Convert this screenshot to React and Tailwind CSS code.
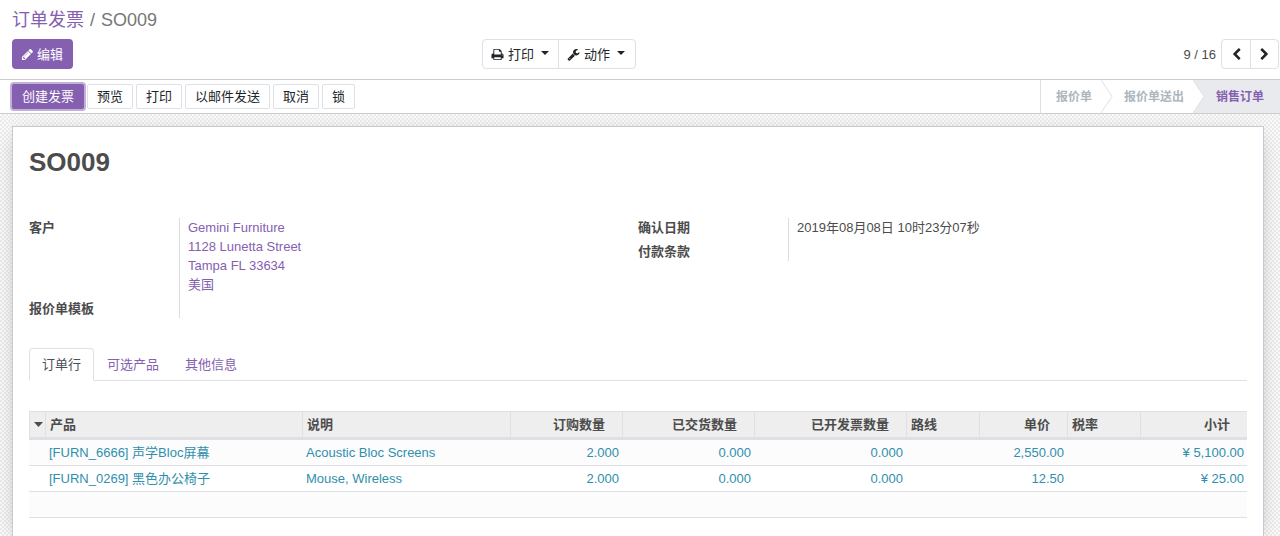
import { useState } from 'react';

const icons = {
  pencil:
    'M491 1536l91-91-235-235-91 91v107h128v128h107zm523-928q0-22-22-22-10 0-17 7l-542 542q-7 7-7 17 0 22 22 22 10 0 17-7l542-542q7-7 7-17zm-54-192l416 416-832 832h-416v-416zm683 96q0 53-37 90l-166 166-416-416 166-165q36-38 90-38 53 0 91 38l235 234q37 39 37 91z',
  print:
    'M448 1536h896v-256h-896v256zm0-640h896v-384h-160q-40 0-68-28t-28-68v-160h-640v640zm1152 64q0-26-19-45t-45-19-45 19-19 45 19 45 45 19 45-19 19-45zm128 0v416q0 13-9.5 22.5t-22.5 9.5h-224v160q0 40-28 68t-68 28h-960q-40 0-68-28t-28-68v-160h-224q-13 0-22.5-9.5t-9.5-22.5v-416q0-79 56.5-135.5t135.5-56.5h64v-544q0-40 28-68t68-28h672q40 0 88 20t76 48l152 152q28 28 48 76t20 88v256h64q79 0 135.5 56.5t56.5 135.5z',
  wrench:
    'M448 1472q0-26-19-45t-45-19-45 19-19 45 19 45 45 19 45-19 19-45zm644-420l-682 682q-37 37-90 37-52 0-91-37l-106-108q-38-36-38-90 0-53 38-91l681-681q39 98 114.5 173.5t173.5 114.5zm634-435q0 39-23 106-47 134-164.5 217.5t-258.5 83.5q-185 0-316.5-131.5t-131.5-316.5 131.5-316.5 316.5-131.5q58 0 121.5 16.5t107.5 46.5q16 11 16 28t-16 28l-293 169v224l193 107q5-3 79-48.5t135.5-81 70.5-35.5q15 0 23.5 10t8.5 25z',
  left: 'M1427 301l-531 531 531 531q19 19 19 45t-19 45l-166 166q-19 19-45 19t-45-19l-742-742q-19-19-19-45t19-45l742-742q19-19 45-19t45 19l166 166q19 19 19 45t-19 45z',
  right:
    'M1363 877l-742 742q-19 19-45 19t-45-19l-166-166q-19-19-19-45t19-45l531-531-531-531q-19-19-19-45t19-45l166-166q19-19 45-19t45 19l742 742q19 19 19 45t-19 45z',
};

function Icon({ name }) {
  return (
    <svg viewBox="0 0 1792 1792" className="size-[13px] shrink-0 fill-current" aria-hidden="true">
      <path d={icons[name]} />
    </svg>
  );
}

function Caret({ size = 'w-2 h-1' }) {
  return (
    <svg viewBox="0 0 8 4" preserveAspectRatio="none" className={`${size} shrink-0 fill-current`} aria-hidden="true">
      <path d="M0 0h8L4 4z" />
    </svg>
  );
}

function MenuButton({ icon, children }) {
  return (
    <button className="flex items-center gap-1 pl-2 pr-[10px] border-l border-[#dee0e8] first:border-l-0 first:pr-[9px]">
      <Icon name={icon} />
      {children}
      <span className="ml-[3px] pb-[2px]">
        <Caret />
      </span>
    </button>
  );
}

function ControlPanel() {
  return (
    <header className="pl-3 pt-2 pb-[10px] border-b border-[#cccccc]">
      <nav className="flex gap-[6px] text-lg leading-6 text-[#777777]">
        <a href="#orders" className="text-[#8560b1]">订单发票</a>
        <span>/</span>
        <span>SO009</span>
      </nav>
      <div className="mt-[7px] grid grid-cols-2">
        <div className="flex justify-between pr-[10px]">
          <button className="flex items-center gap-[3px] h-[30px] pl-[9px] pr-[10px] rounded-sm bg-[#8560b1] text-white">
            <Icon name="pencil" />
            编辑
          </button>
          <div className="flex h-[30px] border border-[#dee0e8] rounded-sm text-[#212529]">
            <MenuButton icon="print">打印</MenuButton>
            <MenuButton icon="wrench">动作</MenuButton>
          </div>
        </div>
        <div className="flex items-center justify-end gap-[5px] pr-px">
          <span>9 / 16</span>
          <div className="flex h-[30px] border border-[#dee0e8] rounded-sm text-[#212529]">
            <button aria-label="上一页" className="pl-2 pr-[7px]">
              <Icon name="left" />
            </button>
            <button aria-label="下一页" className="px-[7px] border-l border-[#dee0e8]">
              <Icon name="right" />
            </button>
          </div>
        </div>
      </div>
    </header>
  );
}

function StepArrow({ next }) {
  return (
    <svg viewBox="0 0 12 33" className={`w-3 h-[33px] ${next}`} aria-hidden="true">
      <path d="M0 0L11 16.500L0 33z" fill="#ffffff" />
      <path d="M0 0L11 16.500L0 33" fill="none" stroke="#dee0e8" />
    </svg>
  );
}

function StatusBar() {
  const actions = ['预览', '打印', '以邮件发送', '取消', '锁'];
  return (
    <div className="flex justify-between pl-3 border-b border-[#cccccc]">
      <div className="flex items-center gap-[3px]">
        <button className="h-[25px] px-[10px] rounded-xs bg-[#8560b1] text-white ring-2 ring-[#c3b0d9]">
          创建发票
        </button>
        {actions.map((action) => (
          <button key={action} className="h-[25px] px-[9px] border border-[#dee0e8] rounded-xs text-[#212529]">
            {action}
          </button>
        ))}
      </div>
      <div className="flex h-[33px] items-center border-l border-[#dee0e8] text-xs font-bold text-[#adb5bd]">
        <button className="pl-[15px] pr-[9px]">报价单</button>
        <StepArrow next="bg-white" />
        <button className="pl-[11px] pr-[9px]">报价单送出</button>
        <StepArrow next="bg-[#e9eaee]" />
        <button className="self-stretch pl-[11px] pr-4 bg-[#e9eaee] text-[#8560b1]">销售订单</button>
      </div>
    </div>
  );
}

function Field({ label, children }) {
  return (
    <div className="group grid grid-cols-[150px_1fr]">
      <dt className="font-bold">{label}</dt>
      <dd className="pl-2 pb-[5px] group-last:pb-0 border-l border-[#dddddd]">{children}</dd>
    </div>
  );
}

const columns = [
  { label: '产品', width: 'w-[257px]' },
  { label: '说明', width: 'w-[208px]' },
  { label: '订购数量', width: 'w-[112px]', numeric: true },
  { label: '已交货数量', width: 'w-[132px]', numeric: true },
  { label: '已开发票数量', width: 'w-[152px]', numeric: true },
  { label: '路线', width: 'w-[73px]' },
  { label: '单价', width: 'w-[88px]', numeric: true },
  { label: '税率', width: 'w-[73px]' },
  { label: '小计', width: 'w-[107px]', numeric: true },
];

const lines = [
  ['[FURN_6666] 声学Bloc屏幕', 'Acoustic Bloc Screens', '2.000', '0.000', '0.000', '', '2,550.00', '', '¥ 5,100.00'],
  ['[FURN_0269] 黑色办公椅子', 'Mouse, Wireless', '2.000', '0.000', '0.000', '', '12.50', '', '¥ 25.00'],
];

function OrderLines() {
  return (
    <table className="w-full mt-[30px] table-fixed border-separate border-spacing-0">
      <thead>
        <tr className="h-[29px] bg-[#eeeeee]">
          <th className="w-4 pl-1 border-l border-t border-b-[3px] border-[#dfe0e5]">
            <Caret size="w-[9px] h-[5px]" />
          </th>
          {columns.map((col) => (
            <th
              key={col.label}
              className={`${col.width} border-l border-t border-b-[3px] border-[#dfe0e5] ${
                col.numeric ? 'text-right pr-[17px]' : 'text-left pl-1'
              }`}
            >
              {col.label}
            </th>
          ))}
        </tr>
      </thead>
      <tbody className="text-[#2f8fad]">
        {lines.map((line) => (
          <tr key={line[0]} className="h-[26px] odd:bg-[#fcfcfc]">
            <td className="border-b border-[#dfe0e5]" />
            {line.map((value, i) => (
              <td
                key={columns[i].label}
                className={`border-b border-[#dfe0e5] ${columns[i].numeric ? 'pr-[3px] text-right' : 'pl-1'}`}
              >
                {value}
              </td>
            ))}
          </tr>
        ))}
        <tr className="h-[26px] bg-[#fcfcfc]">
          <td colSpan={10} className="border-b border-[#dfe0e5]" />
        </tr>
      </tbody>
    </table>
  );
}

export default function App() {
  const [tab, setTab] = useState('订单行');

  return (
    <div className="min-h-screen flex flex-col bg-white font-['Liberation_Sans','Noto_Sans_CJK_SC',sans-serif] text-[13px] leading-[19px] text-[#4c4c4c]">
      <ControlPanel />
      <StatusBar />
      <main className="flex-1 flex flex-col pl-3 pr-4 pt-3 overflow-hidden bg-[conic-gradient(#ebebeb_25%,#f9f9f9_0_50%,#ebebeb_0_75%,#f9f9f9_0)] bg-[length:4px_4px]">
        <section className="flex-1 px-4 pt-4 bg-white border border-b-0 border-[#c8c8d3] shadow-[0_5px_20px_-8px_rgba(0,0,0,0.4)]">
          <h1 className="mt-1 text-[26px] leading-[31px] font-bold">SO009</h1>
          <div className="mt-10 grid grid-cols-2">
            <dl>
              <Field label="客户">
                <a href="#partner" className="block text-[#8560b1]">
                  Gemini Furniture<br />1128 Lunetta Street<br />Tampa FL 33634<br />美国
                </a>
              </Field>
              <Field label="报价单模板" />
            </dl>
            <dl>
              <Field label="确认日期">2019年08月08日 10时23分07秒</Field>
              <Field label="付款条款" />
            </dl>
          </div>
          <div role="tablist" className="mt-[30px] flex border-b border-[#dee2e6]">
            {['订单行', '可选产品', '其他信息'].map((name) => (
              <button
                key={name}
                role="tab"
                aria-selected={tab === name}
                onClick={() => setTab(name)}
                className={`h-[33px] -mb-px px-3 border rounded-t-sm ${
                  tab === name
                    ? 'border-[#dee2e6] border-b-white bg-white text-[#495057]'
                    : 'border-transparent text-[#8560b1]'
                }`}
              >
                {name}
              </button>
            ))}
          </div>
          <OrderLines />
        </section>
      </main>
    </div>
  );
}
